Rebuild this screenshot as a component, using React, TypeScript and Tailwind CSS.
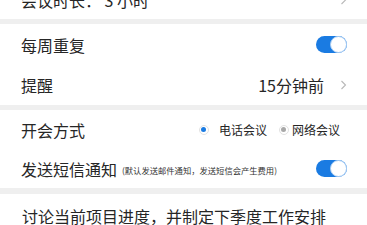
import React from "react";

const font = { fontFamily: '"Noto Sans CJK SC", "Noto Sans", sans-serif' };

function Chevron() {
  return (
    <svg width="7" height="10" viewBox="0 0 7 10" className="shrink-0">
      <path d="M1.5 1 L5.5 5 L1.5 9" fill="none" stroke="#b8b8b8" strokeWidth="1.1" />
    </svg>
  );
}

function Toggle() {
  return (
    <div className="relative w-[31px] h-[17px] rounded-full bg-[#1a7be2] shrink-0">
      <div className="absolute right-0 top-0 w-[17px] h-[17px] rounded-full bg-white border border-[#a9cdf3]" />
    </div>
  );
}

function Radio({ checked }: { checked: boolean }) {
  return (
    <span className="w-[10px] h-[10px] rounded-full border border-[#e2e2e2] flex items-center justify-center shrink-0">
      <span className={checked ? "w-[5px] h-[5px] rounded-full bg-[#1a7be2]" : "w-[5px] h-[5px] rounded-full bg-[#a8a8a8]"} />
    </span>
  );
}

export default function App() {
  return (
    <div className="w-[367px] h-[225px] overflow-hidden bg-[#efefef] text-[#262626] flex flex-col" style={font}>
      <div className="bg-white h-[39px] mt-[-20px] shrink-0 flex items-center justify-between pl-[21px] pr-[20px] text-[16px]">
        <span>会议时长：&nbsp;3 小时</span>
        <Chevron />
      </div>
      <div className="bg-white mt-[5px] shrink-0 flex flex-col">
        <div className="h-[41px] flex items-center justify-between pl-[21px] pr-[20px] text-[16px]">
          <span>每周重复</span>
          <Toggle />
        </div>
        <div className="h-[40px] flex items-center justify-between pl-[21px] pr-[20px] text-[16px]">
          <span>提醒</span>
          <div className="flex items-center gap-[16px]">
            <span>15分钟前</span>
            <Chevron />
          </div>
        </div>
      </div>
      <div className="bg-white mt-[5px] shrink-0 flex flex-col">
        <div className="h-[39px] flex items-center justify-between pl-[21px] pr-[20px] text-[16px]">
          <span>开会方式</span>
          <div className="flex items-center text-[12px] mr-[7px]">
            <Radio checked />
            <span className="ml-[10px]">电话会议</span>
            <span className="ml-[12px]"><Radio checked={false} /></span>
            <span className="ml-[3px]">网络会议</span>
          </div>
        </div>
        <div className="h-[39px] flex items-center justify-between pl-[21px] pr-[20px]">
          <div className="flex items-center">
            <span className="text-[16px]">发送短信通知</span>
            <span className="text-[8.3px] ml-[5px] mt-[3px] text-[#333]">(默认发送邮件通知，发送短信会产生费用)</span>
          </div>
          <Toggle />
        </div>
      </div>
      <div className="bg-white mt-[6px] flex-1 pl-[22px] pt-[10px] text-[16px]">
        <span>讨论当前项目进度，并制定下季度工作安排</span>
      </div>
    </div>
  );
}
